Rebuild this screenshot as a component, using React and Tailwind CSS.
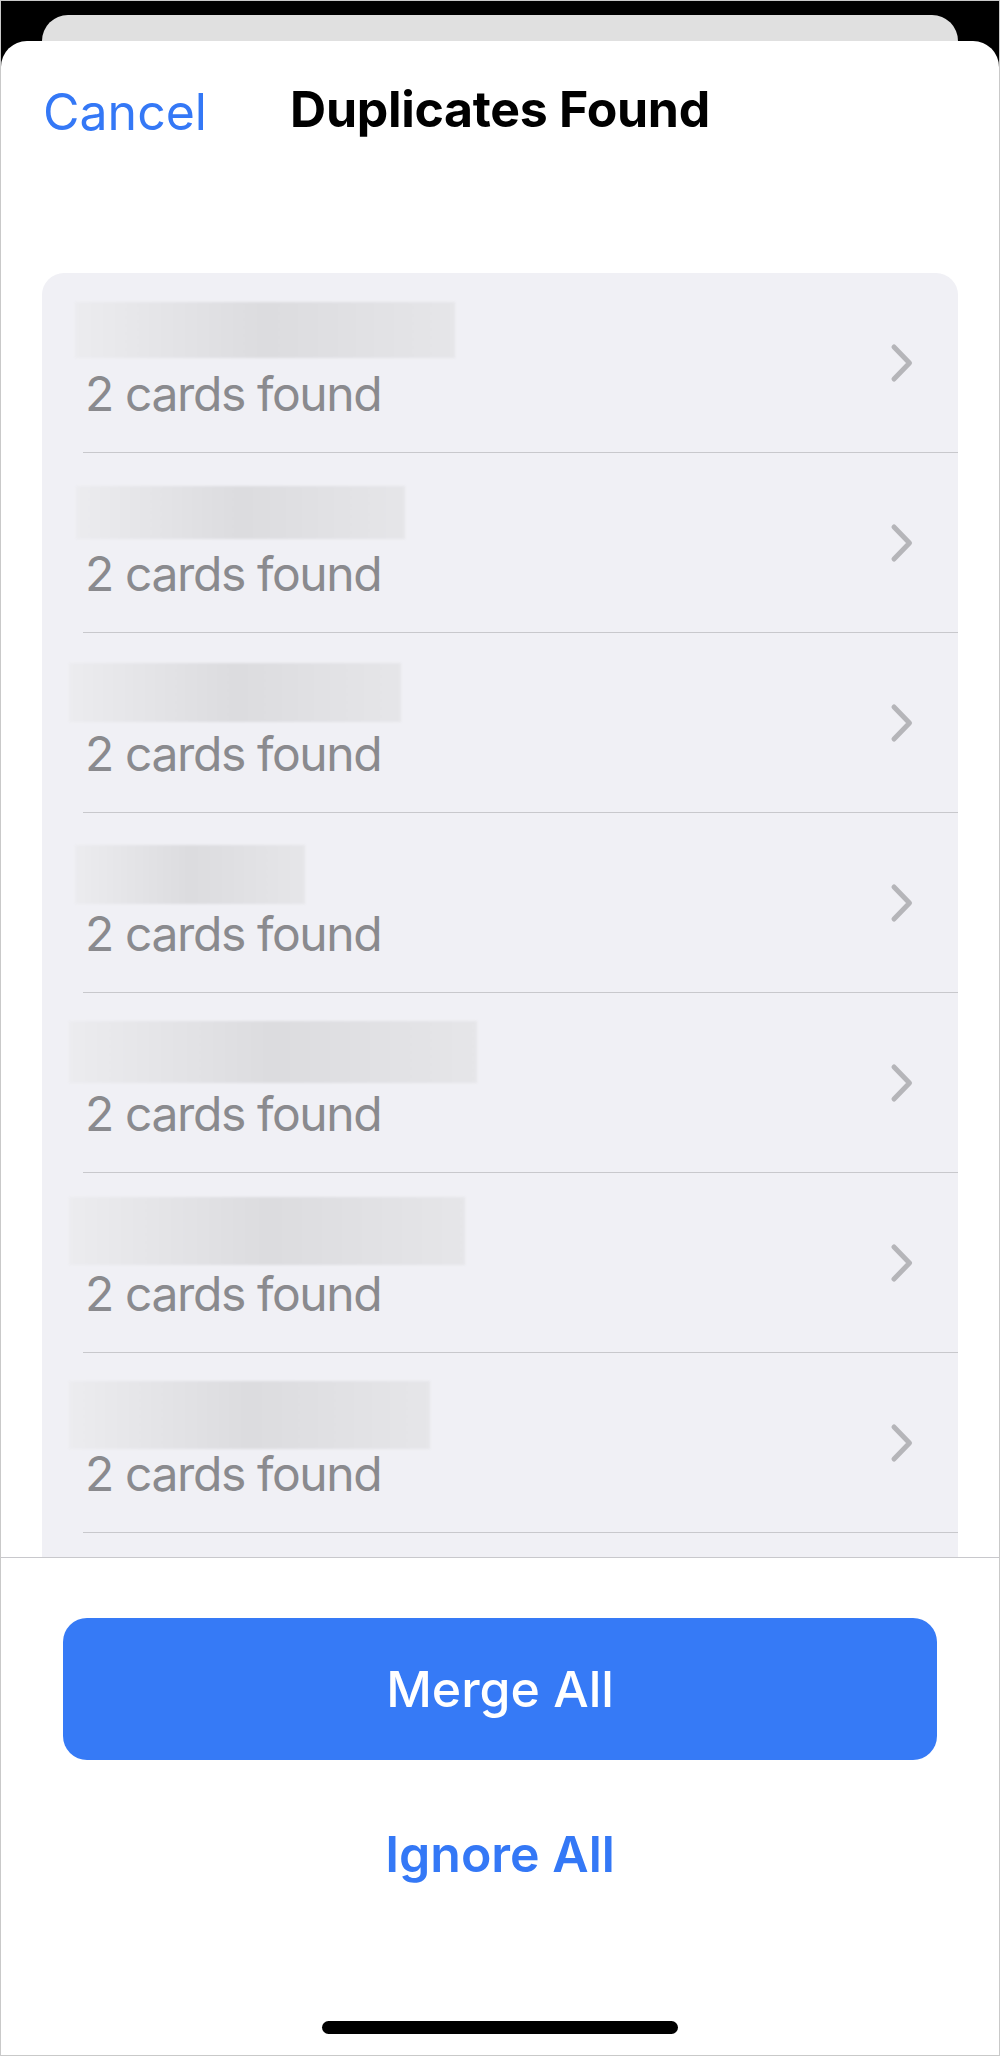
import React from 'react';

const filas = [
  { x: -8, y: 5, w: 380, h: 56 },
  { x: -7, y: 9, w: 329, h: 53 },
  { x: -14, y: 6, w: 332, h: 59 },
  { x: -8, y: 8, w: 230, h: 59 },
  { x: -14, y: 4, w: 408, h: 62 },
  { x: -14, y: 0, w: 396, h: 68 },
  { x: -14, y: 4, w: 361, h: 68 },
];

const Chevron = () => (
  <svg width="24" height="40" viewBox="0 0 24 40" fill="none">
    <polyline
      points="4,4 19.5,20 4,36"
      stroke="#b5b5b9"
      strokeWidth="5"
      strokeLinecap="round"
      strokeLinejoin="round"
    />
  </svg>
);

const Fila = ({ fila }) => (
  <div className="flex h-[180px] shrink-0 pl-[41px]">
    <div className="flex flex-1 items-center justify-between border-b border-[#c8c8cc] pr-[44px]">
      <div className="flex flex-col self-start pt-[24px]">
        <div className="h-[73px]">
          {/* nombre difuminado */}
          <div
            className="bg-linear-to-r from-[#ececef] via-[#dcdcdf] to-[#e6e6e9] blur-[1px]"
            style={{ marginLeft: fila.x, marginTop: fila.y, width: fila.w, height: fila.h }}
          />
        </div>
        <p className="ml-[2px] text-[48px] leading-none tracking-[-1.4px] text-[#8a8a8e]">
          2 cards found
        </p>
      </div>
      <Chevron />
    </div>
  </div>
);

const App = () => {
  return (
    <div
      className="flex h-[2056px] w-[1000px] flex-col overflow-hidden border border-[#c9c9c9] bg-black"
      style={{ fontFamily: 'Inter, "Liberation Sans", sans-serif' }}
    >
      <div className="mx-[41px] mt-[14px] h-[26px] shrink-0 rounded-t-[26px] bg-[#e0e0e0]" />

      <div className="flex flex-1 flex-col overflow-hidden rounded-t-[26px] bg-white">
        <div className="grid h-[232px] shrink-0 grid-cols-[1fr_auto_1fr] items-start pt-[46px]">
          <span className="pl-[42px] text-[50px] leading-none text-[#3478f6]">Cancel</span>
          <h1 className="-mt-[3px] text-[50px] font-bold leading-none tracking-[-0.3px] text-black">
            Duplicates Found
          </h1>
          <span />
        </div>

        <div className="flex-1 overflow-hidden px-[41px]">
          <div className="flex flex-col rounded-t-[22px] bg-[#f0f0f5]">
            {filas.map((fila, i) => (
              <Fila key={i} fila={fila} />
            ))}
            <div className="h-[60px] shrink-0" />
          </div>
        </div>

        <div className="flex h-[498px] shrink-0 flex-col items-center border-t border-[#c8c8cc] px-[62px] pt-[60px]">
          <button className="flex h-[142px] w-full items-center justify-center rounded-[24px] bg-[#367af6] text-[50px] font-medium leading-none text-white">
            Merge All
          </button>
          <button className="mt-[69px] text-[50px] font-semibold leading-none text-[#3478f6]">
            Ignore All
          </button>
          <div className="mt-[142px] h-[13px] w-[356px] rounded-full bg-black" />
        </div>
      </div>
    </div>
  );
};

export default App;
